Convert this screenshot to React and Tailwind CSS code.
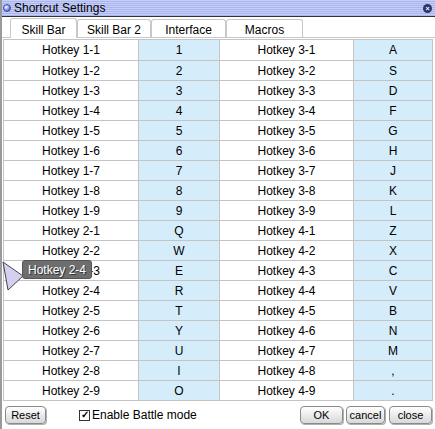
const left = [
  ["Hotkey 1-1", "1"], ["Hotkey 1-2", "2"], ["Hotkey 1-3", "3"], ["Hotkey 1-4", "4"],
  ["Hotkey 1-5", "5"], ["Hotkey 1-6", "6"], ["Hotkey 1-7", "7"], ["Hotkey 1-8", "8"],
  ["Hotkey 1-9", "9"], ["Hotkey 2-1", "Q"], ["Hotkey 2-2", "W"], ["Hotkey 2-3", "E"],
  ["Hotkey 2-4", "R"], ["Hotkey 2-5", "T"], ["Hotkey 2-6", "Y"], ["Hotkey 2-7", "U"],
  ["Hotkey 2-8", "I"], ["Hotkey 2-9", "O"],
];
const right = [
  ["Hotkey 3-1", "A"], ["Hotkey 3-2", "S"], ["Hotkey 3-3", "D"], ["Hotkey 3-4", "F"],
  ["Hotkey 3-5", "G"], ["Hotkey 3-6", "H"], ["Hotkey 3-7", "J"], ["Hotkey 3-8", "K"],
  ["Hotkey 3-9", "L"], ["Hotkey 4-1", "Z"], ["Hotkey 4-2", "X"], ["Hotkey 4-3", "C"],
  ["Hotkey 4-4", "V"], ["Hotkey 4-5", "B"], ["Hotkey 4-6", "N"], ["Hotkey 4-7", "M"],
  ["Hotkey 4-8", ","], ["Hotkey 4-9", "."],
];

const tabs = ["Skill Bar", "Skill Bar 2", "Interface", "Macros"];
const tabW = ["w-[67px]", "w-[74px]", "w-[75px]", "w-[77px]"];

function Btn({ children, className = "" }) {
  return (
    <button
      className={
        "h-[18px] rounded-[4px] border border-[#8a8a8a] bg-gradient-to-b from-white to-[#d8d8d8] text-[11px] leading-none text-black shadow-[1px_1px_0_#b0b0b0] " +
        className
      }
    >
      {children}
    </button>
  );
}

export default function App() {
  return (
    <div
      className="relative w-[435px] h-[429px] overflow-hidden bg-white border-l-2 border-[#9a9a9a] text-black"
      style={{ fontFamily: '"Liberation Sans", Arial, sans-serif' }}
    >
      {/* title bar */}
      <div className="flex h-[17px] items-center border-b border-[#333] bg-[repeating-linear-gradient(180deg,#c8cff6_0px,#c8cff6_1px,#a9b5ec_1px,#a9b5ec_2px)] pl-[1px] pr-[2px]">
        <div className="h-[8px] w-[8px] rounded-full border border-[#3b4fa0] bg-[radial-gradient(circle_at_35%_35%,#ffffff,#6f86e0_60%,#2d3f96)]" />
        <span className="ml-[3px] text-[12px] leading-none text-black">Shortcut Settings</span>
        <div className="ml-auto mr-[1px] flex h-[9px] w-[9px] items-center justify-center rounded-full bg-[#2a3470] text-[7px] font-bold leading-none text-white">
          ×
        </div>
      </div>

      {/* tabs */}
      <div className="flex h-[21px] items-end border-b border-[#c8c8c8] pl-[8px]">
        {tabs.map((t, i) => (
          <div
            key={t}
            className={
              tabW[i] +
              " flex items-center justify-center rounded-t-[3px] border border-b-0 border-[#c8c8c8] bg-white pt-[3px] text-[12px] leading-none " +
              (i === 0 ? "h-[20px] -mb-px" : "h-[18px]")
            }
          >
            {t}
          </div>
        ))}
      </div>

      {/* table */}
      <div className="ml-[1px] mt-[1px] w-[430px] border border-[#c4c4c4]">
        {left.map((row, i) => (
          <div
            key={i}
            className={
              "grid h-[20px] grid-cols-[134px_81px_134px_79px] text-[12px] " +
              (i > 0 ? "border-t border-[#c4c4c4]" : "")
            }
          >
            <div className="flex items-center justify-center">{row[0]}</div>
            <div className="flex items-center justify-center border-l border-[#c4c4c4] bg-[#d5ecfb]">{row[1]}</div>
            <div className="flex items-center justify-center border-l border-[#c4c4c4]">{right[i][0]}</div>
            <div className="flex items-center justify-center border-l border-[#c4c4c4] bg-[#d5ecfb]">{right[i][1]}</div>
          </div>
        ))}
      </div>

      {/* bottom bar */}
      <div className="flex items-center px-[3px] pt-[5px]">
        <Btn className="w-[41px]">Reset</Btn>
        <label className="ml-[33px] flex items-center text-[12px]">
          <span className="mr-[2px] flex h-[11px] w-[11px] items-center justify-center border border-[#333] bg-white text-[10px] font-bold leading-none">
            ✓
          </span>
          Enable Battle mode
        </label>
        <Btn className="ml-auto w-[43px]">OK</Btn>
        <Btn className="ml-[3px] w-[39px]">cancel</Btn>
        <Btn className="ml-[4px] w-[43px]">close</Btn>
      </div>

      {/* tooltip */}
      <svg className="absolute left-0 top-[260px]" width="22" height="32" viewBox="0 0 22 32">
        <polygon points="1,2 21,16 6,30" fill="#d4d0f0" stroke="#444" strokeWidth="1" />
      </svg>
      <div className="absolute left-[20px] top-[260px] flex h-[19px] w-[70px] items-center justify-center rounded-[3px] border border-[#555] bg-[#6e6e6e] text-[12px] text-white [text-shadow:1px_1px_0_#333]">
        Hotkey 2-4
      </div>
    </div>
  );
}
